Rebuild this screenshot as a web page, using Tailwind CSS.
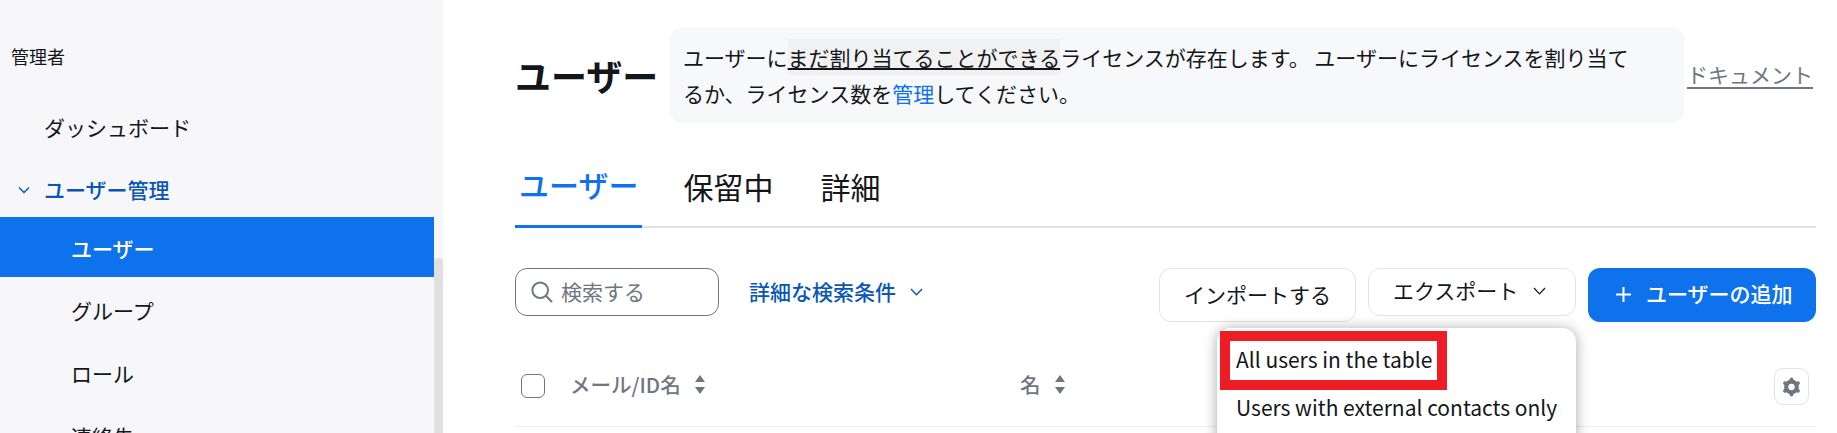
<!DOCTYPE html>
<html lang="ja">
<head>
  <meta charset="UTF-8">
  <title>ユーザー</title>
  <script src="https://cdn.jsdelivr.net/npm/@tailwindcss/browser@4"></script>
</head>
<body class="bg-white h-[433px] overflow-hidden font-['Noto_Sans_CJK_JP',sans-serif] text-[21px] text-[#13161a]">
  <div class="flex h-[433px] overflow-hidden">

    <!-- Sidebar -->
    <aside class="relative w-[443px] shrink-0 bg-[#f7f7fa] overflow-hidden">
      <div class="absolute right-0 top-[258px] bottom-0 w-[9px] rounded-t bg-[#e0e0e0]"></div>
      <div class="h-[98px] pt-[43px] pl-[11px] text-[18px] leading-[26px]">管理者</div>
      <div class="h-[60px] mb-[3px] flex items-center pl-[44px]">ダッシュボード</div>
      <div class="h-[56px] pt-[2px] flex items-center text-[#0956b5] font-medium">
        <svg class="w-[12px] h-[8px] ml-[18px] mr-[14px]" viewBox="0 0 12 8" fill="none" stroke="#0956b5" stroke-width="1.4"><path d="M1 1.5 6 6.5 11 1.5"/></svg>
        ユーザー管理
      </div>
      <div class="w-[434px] h-[60px] mb-[3px] pt-[3px] flex items-center pl-[71px] bg-[#0e72ed] text-white font-medium">ユーザー</div>
      <div class="h-[60px] mb-[3px] pt-[2px] flex items-center pl-[71px]">グループ</div>
      <div class="h-[60px] mb-[3px] pt-[2px] flex items-center pl-[71px]">ロール</div>
      <div class="h-[60px] pt-[2px] flex items-center pl-[71px]">連絡先</div>
    </aside>

    <!-- Main -->
    <main class="flex-1 min-w-0 pl-[72px] pr-[21px] pt-[27px]">
      <div class="flex items-center">
        <h1 class="w-[155px] shrink-0 text-[36px] font-bold leading-[48px] whitespace-nowrap">ユーザー</h1>
        <div class="w-[1014px] h-[96px] shrink-0 rounded-[12px] bg-[#f7f8fa] pl-[13px] pr-[40px] pt-[12px] leading-[36px]">
          ユーザーに<span class="inline-block h-[36px] leading-[36px] align-top bg-[#f1f1f1] underline decoration-2 underline-offset-[2px]">まだ割り当てることができる</span>ライセンスが存在します。 ユーザーにライセンスを割り当てるか、ライセンス数を<span class="text-[#0e72ed]">管理</span>してください。
        </div>
        <a class="ml-[3px] text-[#6e7680] underline decoration-2 underline-offset-[4px] whitespace-nowrap">ドキュメント</a>
      </div>

      <div class="mt-[31px] flex border-b-2 border-[#dfe3e8]">
        <div class="-mb-[2px] h-[74px] pb-[10px] px-[4px] flex items-center border-b-[3px] border-[#0e72ed] text-[30px] text-[#0e72ed] font-medium">ユーザー</div>
        <div class="ml-[35px] h-[72px] pb-[8px] px-1.5 flex items-center text-[30px]">保留中</div>
        <div class="ml-[35px] h-[72px] pb-[8px] px-1.5 flex items-center text-[30px]">詳細</div>
      </div>

      <!-- Toolbar -->
      <div class="mt-[40px] h-[54px] flex items-start">
        <div class="w-[204px] h-[48px] flex items-center rounded-[12px] border border-[#6e7680] pl-[15px] text-[#6e7680]">
          <svg class="w-[22px] h-[22px] mr-[8px]" viewBox="0 0 22 22" fill="none" stroke="#6e7680" stroke-width="2"><circle cx="9.200" cy="9.200" r="7.800"/><path d="M14.800 14.800 21 21"/></svg>
          検索する
        </div>
        <div class="ml-[30px] h-[48px] flex items-center text-[#0956b5] font-medium">
          詳細な検索条件
          <svg class="w-[13px] h-[8px] ml-[14px]" viewBox="0 0 13 8" fill="none" stroke="#0956b5" stroke-width="1.4"><path d="M1 1 6.5 6.8 12 1"/></svg>
        </div>
        <div class="ml-auto flex items-start gap-3">
          <button class="w-[197px] h-[54px] rounded-[12px] border border-[#dfe3e8] bg-white">インポートする</button>
          <div class="relative">
            <button class="w-[208px] h-[48px] pb-[2px] flex items-center rounded-[12px] border border-[#dfe3e8] bg-white pl-[24px]">
              エクスポート
              <svg class="w-[13px] h-[8px] ml-[15px]" viewBox="0 0 13 8" fill="none" stroke="#13161a" stroke-width="1.2"><path d="M1 1 6.5 6.8 12 1"/></svg>
            </button>
            <!-- Export menu -->
            <div class="absolute z-10 -left-[151px] top-[60px] w-[359px] h-[160px] rounded-[14px] bg-white pt-[7px] pl-[19px] shadow-[0_1px_14px_rgba(0,0,0,0.35)]">
              <div class="h-[48px] leading-[48px] whitespace-nowrap">All users in the table</div>
              <div class="h-[48px] leading-[48px] whitespace-nowrap">Users with external contacts only</div>
              <div class="absolute left-[3px] top-[3px] w-[227px] h-[59px] border-[10px] border-[#ee1c25]"></div>
            </div>
          </div>
          <button class="w-[228px] h-[54px] pb-[2px] flex items-center rounded-[12px] bg-[#0e72ed] pl-[28px] text-white font-medium">
            <svg class="w-[15px] h-[15px] mr-[15px]" viewBox="0 0 15 15" fill="none" stroke="#fff" stroke-width="2"><path d="M7.5 0V15M0 7.5H15"/></svg>
            ユーザーの追加
          </button>
        </div>
      </div>

      <!-- Table header -->
      <div class="mt-[46px] h-[59px] flex items-start border-b border-[#eceef0] text-[#6e7680]">
        <div class="ml-1.5 mt-[6px] w-[24px] h-[24px] rounded-[6px] border border-[#6e7680] bg-white"></div>
        <div class="ml-[25px] w-[450px] h-[32px] flex items-center font-medium text-[20.5px]">
          メール/ID名
          <svg class="w-[10px] h-[19px] ml-[14px]" viewBox="0 0 10 19" fill="#6e7680"><path d="M5 0 10 7H0ZM5 19 0 12H10Z"/></svg>
        </div>
        <div class="h-[32px] flex items-center font-medium text-[20.5px]">
          名
          <svg class="w-[10px] h-[19px] ml-[14px]" viewBox="0 0 10 19" fill="#6e7680"><path d="M5 0 10 7H0ZM5 19 0 12H10Z"/></svg>
        </div>
        <button class="ml-auto mr-[7px] w-[35px] h-[37px] flex items-center justify-center rounded-[9px] border border-[#dfe3e8] bg-white">
          <svg class="w-[19px] h-[20px]" viewBox="0 0 18 18" fill="none" stroke="#6e7680"><circle cx="9" cy="9" r="5" stroke-width="4"/><path stroke-width="3.500" stroke-linecap="round" d="M9 1.800V2.500M15.200 5.400 14.600 5.750M15.200 12.600 14.600 12.250M9 16.200V15.500M2.800 12.600 3.400 12.250M2.800 5.400 3.400 5.750"/></svg>
        </button>
      </div>
    </main>
  </div>
</body>
</html>
